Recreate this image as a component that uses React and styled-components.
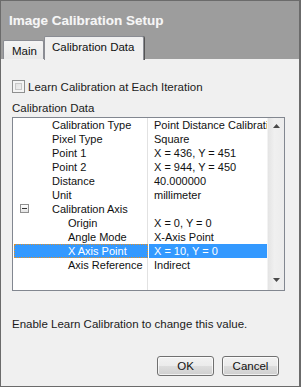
import React from 'react';
import styled, { createGlobalStyle } from 'styled-components';

const GlobalStyle = createGlobalStyle`
    html, body {
        margin: 0;
        padding: 0;
        background: #f0f0f0;
    }
    * { box-sizing: border-box; }
`

const ui = `"Liberation Sans", Arial, sans-serif`

const Window = styled.div`
    width: 301px;
    height: 387px;
    display: flex;
    flex-direction: column;
    border: 1px solid #6b6b6b;
    border-right-width: 2px;
    background: #9d9d9d;
    font-family: ${ui};
    font-size: 11px;
    color: #1b1b1b;
    overflow: hidden;
`

const TitleBar = styled.div`
    height: 35px;
    padding: 12px 0 0 8px;
    color: #f6f6f6;
    font-size: 13.5px;
    font-weight: bold;
    text-shadow: 0 0 1px rgba(255, 255, 255, 0.25);
`

const TabStrip = styled.div`
    height: 23px;
    display: flex;
    align-items: flex-end;
    padding-left: 2px;
`

const Tab = styled.div`
    position: relative;
    height: ${p => (p.$active ? '24px' : '19px')};
    margin-bottom: ${p => (p.$active ? '-1px' : '0')};
    padding: ${p => (p.$active ? '4px 0 0 7px' : '4px 0 0 8px')};
    width: ${p => (p.$active ? '100px' : '41px')};
    margin-left: ${p => (p.$active ? '0' : '0')};
    border: 1px solid #8a8c93;
    border-bottom: none;
    border-radius: 2px 2px 0 0;
    background: ${p => (p.$active ? '#f0f0f0' : 'linear-gradient(#f4f4f4, #e9e9e9)')};
    box-shadow: ${p => (p.$active ? '1px 0 0 #555' : 'none')};
    font-size: 11.5px;
    color: #111;
    z-index: ${p => (p.$active ? 2 : 1)};
`

const Panel = styled.div`
    flex: 1;
    display: flex;
    flex-direction: column;
    padding: 0 0 0 11px;
    background: #f0f0f0;
`

const CheckRow = styled.label`
    display: flex;
    align-items: center;
    gap: 3px;
    margin-top: 21px;
    height: 13px;
    font-size: 11.5px;
`

const CheckBox = styled.span`
    width: 13px;
    height: 13px;
    border: 1px solid #8e8f8f;
    background: linear-gradient(135deg, #dcdcdc, #f6f6f6);
    box-shadow: inset 0 0 0 2px #f4f4f4, inset 0 0 0 3px #c8c8c8;
`

const GroupLabel = styled.div`
    margin-top: 9px;
    height: 15px;
    font-size: 11.5px;
`

const TreeBox = styled.div`
    width: 273px;
    height: 174px;
    border: 1px solid #828790;
    background: #fff;
    display: flex;
`

const Rows = styled.div`
    flex: 1;
    background: linear-gradient(to right, transparent 134px, #e2e2e2 134px, #e2e2e2 135px, transparent 135px);
    overflow: hidden;
`

const Row = styled.div`
    height: 14px;
    display: flex;
    line-height: 14px;
`

const NameCell = styled.div`
    position: relative;
    width: 134px;
    margin-left: 1px;
    padding-left: ${p => (p.$level ? '54px' : '38px')};
    white-space: nowrap;
    background: ${p => (p.$selected ? '#3399ff' : 'transparent')};
    color: ${p => (p.$selected ? '#fff' : '#111')};
    outline: ${p => (p.$selected ? '1px dotted #e0902a' : 'none')};
    outline-offset: -1px;
`

const ValueCell = styled.div`
    width: 118px;
    margin-left: 1px;
    padding-left: 5px;
    white-space: nowrap;
    overflow: hidden;
    background: ${p => (p.$selected ? '#3399ff' : 'transparent')};
    color: ${p => (p.$selected ? '#fff' : '#111')};
`

const Expander = styled.span`
    position: absolute;
    left: 6px;
    top: 2px;
    width: 9px;
    height: 9px;
    border: 1px solid #909090;
    background: linear-gradient(#fff, #e4e4e4);

    &::after {
        content: '';
        position: absolute;
        left: 1px;
        top: 3px;
        width: 5px;
        height: 1px;
        background: #333;
    }
`

const ScrollBar = styled.div`
    width: 17px;
    display: flex;
    flex-direction: column;
    justify-content: space-between;
    align-items: center;
    padding: 6px 0 8px 1px;
    background: linear-gradient(to right, #e4e4e4, #f0f0f0 40%, #ececec);
    border-left: 1px solid #f3f3f3;
`

const Note = styled.div`
    margin-top: 27px;
    font-size: 11.5px;
`

const ButtonRow = styled.div`
    display: flex;
    justify-content: flex-end;
    gap: 8px;
    margin-top: 26px;
    padding-right: 20px;
`

const Button = styled.button`
    width: 57px;
    height: 20px;
    padding: 0;
    border: 1px solid #707070;
    border-radius: 3px;
    background: linear-gradient(#f2f2f2 0%, #ebebeb 50%, #dddddd 51%, #cfcfcf 100%);
    box-shadow: inset 0 0 0 1px rgba(255, 255, 255, 0.7);
    font-family: ${ui};
    font-size: 11.5px;
    color: #111;
`

const rows = [
    { name: 'Calibration Type', value: 'Point Distance Calibration' },
    { name: 'Pixel Type', value: 'Square' },
    { name: 'Point 1', value: 'X = 436, Y = 451' },
    { name: 'Point 2', value: 'X = 944, Y = 450' },
    { name: 'Distance', value: '40.000000' },
    { name: 'Unit', value: 'millimeter' },
    { name: 'Calibration Axis', value: '', expander: true },
    { name: 'Origin', value: 'X = 0, Y = 0', level: 1 },
    { name: 'Angle Mode', value: 'X-Axis Point', level: 1 },
    { name: 'X Axis Point', value: 'X = 10, Y = 0', level: 1, selected: true },
    { name: 'Axis Reference', value: 'Indirect', level: 1 },
]

const Arrow = ({ up }) => (
    <svg width="7" height="4" viewBox="0 0 7 4">
        <path d={up ? 'M0 4 L3.5 0 L7 4 Z' : 'M0 0 L7 0 L3.5 4 Z'} fill="#4a4a4a" />
    </svg>
)

export default function App() {
    return (
        <>
            <GlobalStyle />
            <Window>
                <TitleBar>Image Calibration Setup</TitleBar>
                <TabStrip>
                    <Tab>Main</Tab>
                    <Tab $active>Calibration Data</Tab>
                </TabStrip>
                <Panel>
                    <CheckRow>
                        <CheckBox />
                        Learn Calibration at Each Iteration
                    </CheckRow>
                    <GroupLabel>Calibration Data</GroupLabel>
                    <TreeBox>
                        <Rows>
                            {rows.map(r => (
                                <Row key={r.name}>
                                    <NameCell $level={r.level} $selected={r.selected}>
                                        {r.expander && <Expander />}
                                        {r.name}
                                    </NameCell>
                                    <ValueCell $selected={r.selected}>{r.value}</ValueCell>
                                </Row>
                            ))}
                        </Rows>
                        <ScrollBar>
                            <Arrow up />
                            <Arrow />
                        </ScrollBar>
                    </TreeBox>
                    <Note>Enable Learn Calibration to change this value.</Note>
                    <ButtonRow>
                        <Button>OK</Button>
                        <Button>Cancel</Button>
                    </ButtonRow>
                </Panel>
            </Window>
        </>
    )
}
